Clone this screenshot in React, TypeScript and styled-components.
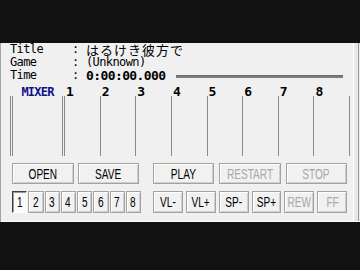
import { FC } from "react";
import styled, { createGlobalStyle } from "styled-components";

const GlobalStyle = createGlobalStyle`
  html, body {
    margin: 0;
    padding: 0;
    background: #111111;
  }
  body {
    width: 360px;
    height: 270px;
    overflow: hidden;
  }
`;

const channels = ["1", "2", "3", "4", "5", "6", "7", "8"];

const Screen = styled.div`
  width: 360px;
  height: 270px;
  box-sizing: border-box;
  padding-top: 43px;
  background: #111111;
`;

const Panel = styled.div`
  width: 360px;
  height: 179px;
  box-sizing: border-box;
  padding-left: 10px;
  background: #f0f0f0;
  overflow: hidden;
  display: flex;
  flex-direction: column;
  box-shadow: inset 1px 0 0 #a4a4a4, inset 0 -1px 0 #fafafa,
    inset -1px 0 0 #ececec, inset -2px 0 0 #9a9a9a, inset -6px 0 0 #e8e8e8,
    inset -7px 0 0 #ffffff;
`;

const InfoRow = styled.div`
  display: flex;
  align-items: center;
  height: 13px;
  white-space: nowrap;
  color: #000;
  font-family: "DejaVu Sans Mono", "Noto Sans CJK JP", monospace;
  font-size: 12px;
  letter-spacing: -0.6px;
  line-height: 13px;
`;

const InfoLabel = styled.span`
  width: 62px;
`;

const InfoColon = styled.span`
  width: 14px;
`;

const InfoValue = styled.span<{ $cjk?: boolean }>`
  font-family: ${(p) =>
    p.$cjk
      ? '"Noto Sans CJK JP", sans-serif'
      : '"DejaVu Sans Mono", monospace'};
  font-size: ${(p) => (p.$cjk ? "13px" : "12px")};
  letter-spacing: ${(p) => (p.$cjk ? "1px" : "-0.6px")};
  line-height: 13px;
`;

const TimeValue = styled.span`
  font-family: "DejaVu Sans Mono", monospace;
  font-weight: bold;
  font-size: 13px;
  letter-spacing: -0.6px;
  line-height: 13px;
`;

const SeekBar = styled.div`
  width: 167px;
  height: 3px;
  margin: 2px 0 0 10px;
  background: #7c7c7c;
  border-top: 1px solid #6a6a6a;
  box-sizing: border-box;
`;

const Mixer = styled.div`
  display: flex;
  margin-top: 4px;
`;

const Master = styled.div`
  width: 55px;
  display: flex;
  flex-direction: column;
`;

const Channels = styled.div`
  width: 285px;
  display: grid;
  grid-template-columns: repeat(8, 1fr);
`;

const Channel = styled.div`
  display: flex;
  flex-direction: column;
`;

const ChannelLabel = styled.div<{ $master?: boolean }>`
  height: 10px;
  padding-left: ${(p) => (p.$master ? "0" : "1px")};
  text-align: ${(p) => (p.$master ? "center" : "left")};
  font-family: "DejaVu Sans Mono", monospace;
  font-weight: bold;
  font-size: ${(p) => (p.$master ? "12px" : "13px")};
  letter-spacing: ${(p) => (p.$master ? "-0.8px" : "0")};
  line-height: 12px;
  color: ${(p) => (p.$master ? "#10108c" : "#000")};
`;

const Track = styled.div<{ $master?: boolean }>`
  height: 60px;
  box-sizing: border-box;
  border-right: ${(p) =>
    p.$master ? "3px double #8a8a8a" : "1px solid #8a8a8a"};
  border-left: ${(p) => (p.$master ? "3px double #8a8a8a" : "none")};
`;

const Controls = styled.div`
  display: flex;
  flex-direction: column;
  gap: 7px;
  margin-top: 7px;
  padding-left: 2px;
`;

const ControlRow = styled.div<{ $height: number }>`
  height: ${(p) => p.$height}px;
  display: grid;
  grid-template-columns: 129px 194px;
  column-gap: 12px;
`;

const Group = styled.div<{ $cols: number; $gap: number; $width?: number }>`
  width: ${(p) => (p.$width ? `${p.$width}px` : "auto")};
  display: grid;
  grid-template-columns: repeat(${(p) => p.$cols}, 1fr);
  column-gap: ${(p) => p.$gap}px;
`;

const Button = styled.button<{ $pressed?: boolean }>`
  box-sizing: border-box;
  height: 100%;
  min-width: 0;
  margin: 0;
  padding: 0;
  display: flex;
  align-items: center;
  justify-content: center;
  overflow: hidden;
  font-family: "Liberation Sans", Arial, sans-serif;
  font-size: 14px;
  color: #000;
  background: ${(p) => (p.$pressed ? "#fbfbfb" : "#f1f1f1")};
  border: 1px solid;
  border-color: ${(p) =>
    p.$pressed ? "#404040 #ffffff #ffffff #404040" : "#a2a2a2"};
  box-shadow: ${(p) =>
    p.$pressed
      ? "inset 1px 1px 0 #9a9a9a"
      : "inset 1px 1px 0 #ffffff, inset -1px -1px 0 #cfcfcf"};

  &:disabled {
    color: #a8a8a8;
  }
`;

const ButtonText = styled.span`
  display: inline-block;
  white-space: nowrap;
  transform: scaleX(0.72);
`;

type BtnProps = { label: string; disabled?: boolean; pressed?: boolean };

const Btn: FC<BtnProps> = ({ label, disabled, pressed }) => (
  <Button disabled={disabled} $pressed={pressed}>
    <ButtonText>{label}</ButtonText>
  </Button>
);

const App: FC = () => {
  return (
    <Screen>
      <GlobalStyle />
      <Panel>
        {/* INFO */}
        <InfoRow>
          <InfoLabel>Title</InfoLabel>
          <InfoColon>:</InfoColon>
          <InfoValue $cjk>はるけき彼方で</InfoValue>
        </InfoRow>
        <InfoRow>
          <InfoLabel>Game</InfoLabel>
          <InfoColon>:</InfoColon>
          <InfoValue>(Unknown)</InfoValue>
        </InfoRow>
        <InfoRow>
          <InfoLabel>Time</InfoLabel>
          <InfoColon>:</InfoColon>
          <TimeValue>0:00:00.000</TimeValue>
          <SeekBar />
        </InfoRow>

        {/* MIXER */}
        <Mixer>
          <Master>
            <ChannelLabel $master>MIXER</ChannelLabel>
            <Track $master />
          </Master>
          <Channels>
            {channels.map((ch) => (
              <Channel key={ch}>
                <ChannelLabel>{ch}</ChannelLabel>
                <Track />
              </Channel>
            ))}
          </Channels>
        </Mixer>

        {/* BUTTONS */}
        <Controls>
          <ControlRow $height={21}>
            <Group $cols={2} $gap={4} $width={127}>
              <Btn label="OPEN" />
              <Btn label="SAVE" />
            </Group>
            <Group $cols={3} $gap={5}>
              <Btn label="PLAY" />
              <Btn label="RESTART" disabled />
              <Btn label="STOP" disabled />
            </Group>
          </ControlRow>
          <ControlRow $height={22}>
            <Group $cols={8} $gap={1}>
              {channels.map((ch, i) => (
                <Btn key={ch} label={ch} pressed={i === 0} />
              ))}
            </Group>
            <Group $cols={6} $gap={3}>
              <Btn label="VL-" />
              <Btn label="VL+" />
              <Btn label="SP-" />
              <Btn label="SP+" />
              <Btn label="REW" disabled />
              <Btn label="FF" disabled />
            </Group>
          </ControlRow>
        </Controls>
      </Panel>
    </Screen>
  );
};

export default App;
